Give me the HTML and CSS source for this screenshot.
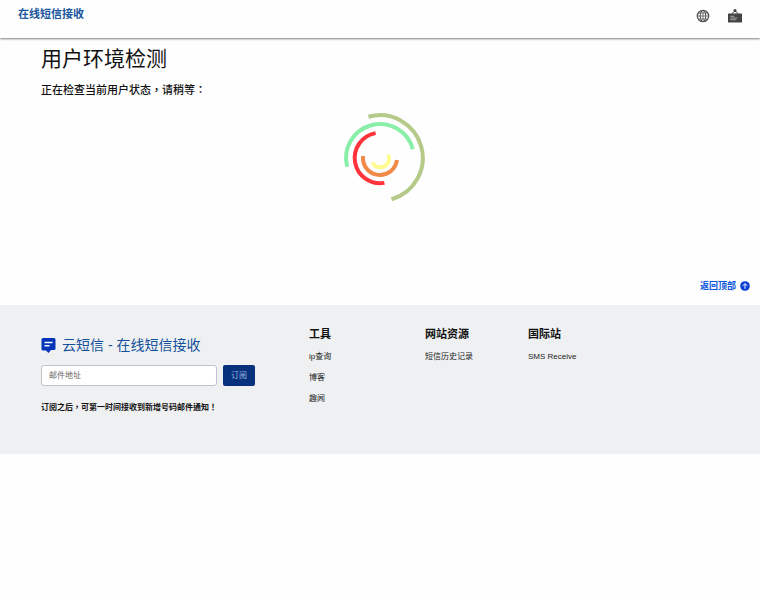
FILE: index.html
```html
<!DOCTYPE html>
<html lang="zh-CN">
<head>
    <meta charset="utf-8">
    <title>在线短信接收</title>
    <link rel="stylesheet" href="styles.css">
</head>
<body>
    <header class="navbar" id="top">
        <a class="brand" href="#">在线短信接收</a>
        <nav class="nav-icons">
            <a href="#" aria-label="语言">
                <svg width="14" height="14" viewBox="0 0 14 14" fill="none" stroke="#555">
                    <circle cx="7" cy="7" r="5.7" stroke-width="1.3"/>
                    <ellipse cx="7" cy="7" rx="2.7" ry="5.7"/>
                    <path d="M7 1v12M1.2 7h11.6M2.2 4h9.6M2.2 10h9.6" stroke-width=".8"/>
                </svg>
            </a>
            <a href="#" aria-label="公告">
                <svg width="14" height="14" viewBox="0 0 14 14">
                    <path d="M3.5 5L7 1.8L10.5 5" fill="none" stroke="#444" stroke-width="1"/>
                    <circle cx="7" cy="1.6" r="1.5" fill="#444"/>
                    <rect x="0" y="4.5" width="14" height="9" rx=".6" fill="#444"/>
                    <path d="M2.3 7.3h4M2.3 9h7M2.3 10.7h6" stroke="#bbb" stroke-width=".8"/>
                </svg>
            </a>
        </nav>
    </header>

    <main class="content">
        <h1>用户环境检测</h1>
        <p class="status cjk-center" lang="zh-Hant">正在检查当前用户状态，请稍等：</p>
        <div class="loader">
            <svg width="90" height="90" viewBox="0 0 90 90" fill="none" stroke-width="4">
                <path d="M33.5 3.8A42 42 0 0 1 56.5 86.2" stroke="#b5c988"/>
                <path d="M12.2 53.8A33 33 0 0 1 77.8 36.2" stroke="#88eea8"/>
                <path d="M40.6 20.1A25 25 0 0 0 49.4 69.9" stroke="#ff333b"/>
                <path d="M28.1 42.9A16 16 0 0 0 61.9 47.1" stroke="#f18a49"/>
                <path d="M37.3 49.3A8.7 8.7 0 1 0 53.3 41.6" stroke="#fffb91"/>
            </svg>
        </div>
    </main>

    <div class="back-top">
        <a href="#top">返回顶部
            <svg width="10" height="10" viewBox="0 0 10 10">
                <circle cx="5" cy="5" r="4.8" fill="#0b3fd6"/>
                <path d="M5 7.8V2.8M2.8 4.8L5 2.6l2.2 2.2" fill="none" stroke="#fff" stroke-width="1"/>
            </svg>
        </a>
    </div>

    <footer class="footer">
        <div class="subscribe">
            <h2>
                <svg width="15" height="16" viewBox="0 0 15 16">
                    <path d="M2 1h11q1.5 0 1.5 1.5v9q0 1.5-1.5 1.5H10L7.5 16 5 13.5H2q-1.5 0-1.5-1.5V2.5Q.5 1 2 1z" fill="#0534b8"/>
                    <path d="M3.5 5.5h8M3.5 8.7h5" stroke="#fff" stroke-width="1.5"/>
                </svg>
                云短信 - 在线短信接收
            </h2>
            <form class="subscribe-form">
                <input type="email" placeholder="邮件地址" aria-label="邮件地址">
                <button type="button">订阅</button>
            </form>
            <p class="note cjk-center" lang="zh-Hant">订阅之后，可第一时间接收到新增号码邮件通知！</p>
        </div>
        <div class="links">
            <h3>工具</h3>
            <a href="#">ip查询</a>
            <a href="#">博客</a>
            <a href="#">趣闻</a>
        </div>
        <div class="links">
            <h3>网站资源</h3>
            <a href="#">短信历史记录</a>
        </div>
        <div class="links">
            <h3>国际站</h3>
            <a href="#">SMS Receive</a>
        </div>
    </footer>
</body>
</html>
```
FILE: styles.css
```css
* {
    box-sizing: border-box;
}
body {
    margin: 0;
    background: #fefefe;
    color: #111;
    font-family: "Liberation Sans", "Noto Sans CJK SC", sans-serif;
    font-size: 11px;
    line-height: 16px;
}
a {
    color: inherit;
    text-decoration: none;
}
h1, h2, h3, p {
    margin: 0;
}
svg {
    display: block;
}
/* centred full-width punctuation */
.cjk-center {
    font-family: "Liberation Sans", "Noto Sans CJK TC", sans-serif;
}
.navbar {
    display: flex;
    justify-content: space-between;
    align-items: flex-start;
    height: 38px;
    padding: 6px 18px;
    box-shadow: 0 1px 2px rgba(0, 0, 0, 0.5);
}
.brand {
    color: #1a569d;
    font-weight: 700;
}
.nav-icons {
    display: flex;
    gap: 18px;
    padding-top: 3px;
}
.content {
    padding: 5px 41px 0;
}
h1 {
    font-size: 21px;
    font-weight: 400;
    line-height: 32px;
}
.status {
    margin-top: 7px;
    font-weight: 500;
}
.loader {
    display: flex;
    justify-content: center;
    padding: 15px 0 75px;
}
.back-top {
    display: flex;
    justify-content: flex-end;
    padding: 0 10px 11px;
    color: #0b57e0;
    font-size: 9px;
    font-weight: 700;
}
.back-top a {
    display: flex;
    align-items: center;
    gap: 4px;
}
.footer {
    display: grid;
    grid-template-columns: 268fr 116fr 103fr 191fr;
    min-height: 149px;
    padding: 21px 41px;
    background: #eff0f2;
}
.subscribe {
    padding-top: 8px;
}
.subscribe h2 {
    display: flex;
    align-items: center;
    gap: 6px;
    color: #12509b;
    font-size: 14px;
    font-weight: 400;
    line-height: 22px;
}
.subscribe-form {
    display: flex;
    gap: 6px;
    margin: 9px 0 14px;
}
.subscribe-form input {
    width: 176px;
    height: 21px;
    padding: 0 7px;
    border: 1px solid #c0c3c7;
    border-radius: 3px;
    background: #fff;
    font: inherit;
    font-size: 8px;
}
.subscribe-form input::placeholder {
    color: #666;
}
.subscribe-form button {
    width: 32px;
    height: 21px;
    padding: 0;
    border: 0;
    border-radius: 2px;
    background: #07317d;
    color: #9dbbe3;
    font: inherit;
    font-size: 8px;
}
.note {
    font-size: 8px;
    font-weight: 700;
}
.links h3 {
    margin-bottom: 7px;
    font-size: 11px;
    font-weight: 700;
}
.links a {
    display: block;
    margin-bottom: 5px;
    color: #222;
    font-size: 8px;
}
```
